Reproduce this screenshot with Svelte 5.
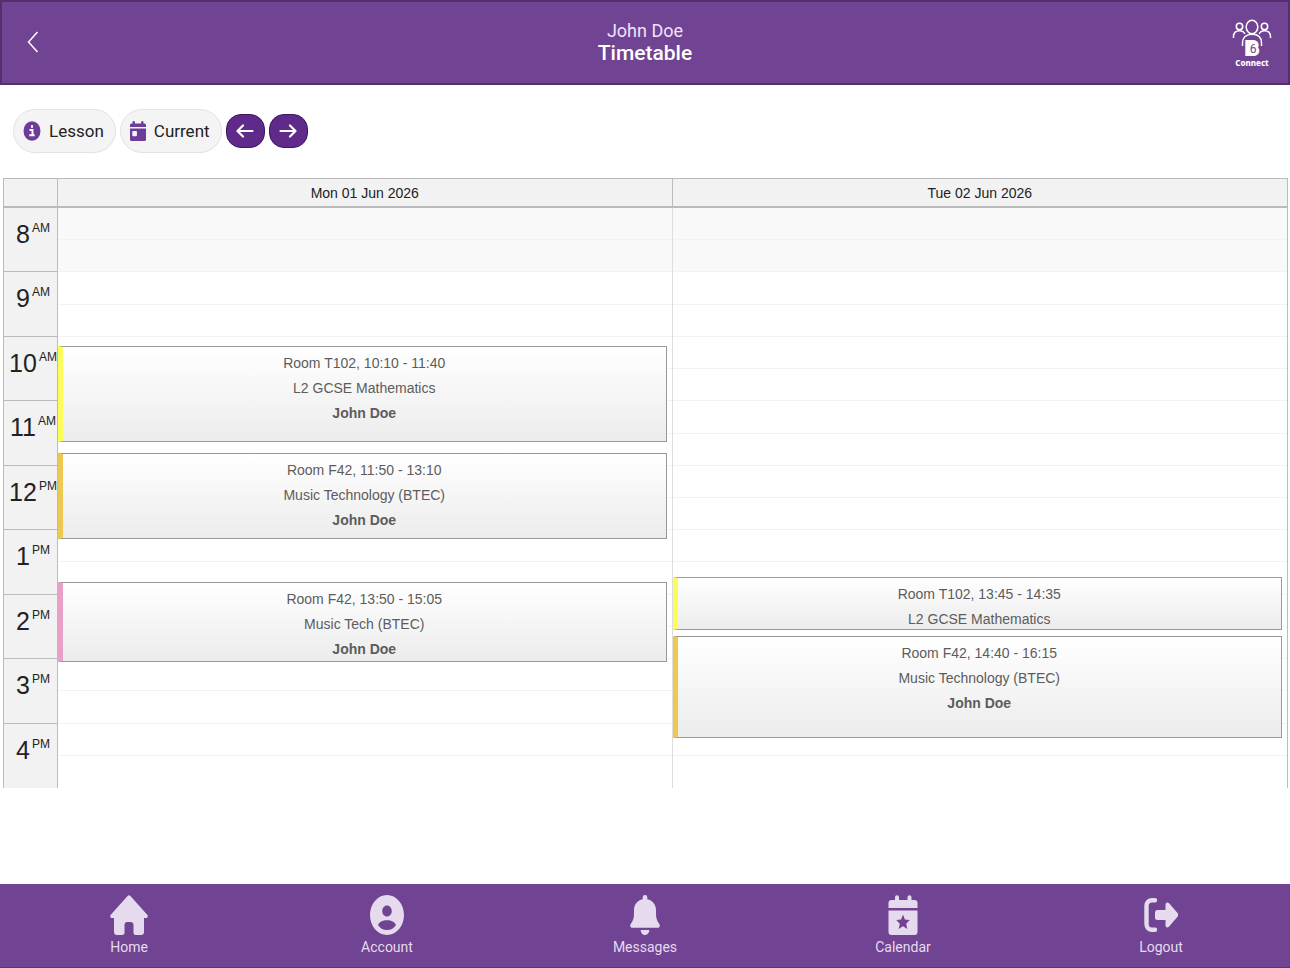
<script>
  // the board shows 8:00 to 17:00, one grid row for every five minutes
  const firstHour = 8;
  const hours = [8, 9, 10, 11, 12, 13, 14, 15, 16];

  const days = [
    {
      label: 'Mon 01 Jun 2026',
      lessons: [
        { room: 'Room T102', start: '10:10', end: '11:40', title: 'L2 GCSE Mathematics', name: 'John Doe', colour: 'yellow' },
        { room: 'Room F42', start: '11:50', end: '13:10', title: 'Music Technology (BTEC)', name: 'John Doe', colour: 'amber' },
        { room: 'Room F42', start: '13:50', end: '15:05', title: 'Music Tech (BTEC)', name: 'John Doe', colour: 'pink' }
      ]
    },
    {
      label: 'Tue 02 Jun 2026',
      lessons: [
        { room: 'Room T102', start: '13:45', end: '14:35', title: 'L2 GCSE Mathematics', name: '', colour: 'yellow' },
        { room: 'Room F42', start: '14:40', end: '16:15', title: 'Music Technology (BTEC)', name: 'John Doe', colour: 'amber' }
      ]
    }
  ];

  function line(time) {
    const [h, m] = time.split(':').map(Number);
    return (h - firstHour) * 12 + m / 5 + 1;
  }
</script>

<div class="page">
  <header class="topbar">
    <button class="back" aria-label="Back">
      <svg width="12" height="22" viewBox="0 0 12 22"><path d="M10.5 1 1.5 11l9 10" fill="none" stroke="currentColor" stroke-width="1.5" /></svg>
    </button>
    <div class="heading">
      <span class="person">John Doe</span>
      <h1>Timetable</h1>
    </div>
    <a class="connect" href="#connect">
      <svg width="40" height="38" viewBox="0 0 40 38" fill="none" stroke="currentColor" stroke-width="1.5">
        <ellipse cx="20" cy="8" rx="5.8" ry="6.8" />
        <circle cx="7.5" cy="7.5" r="3.2" />
        <circle cx="32.5" cy="7.5" r="3.2" />
        <path d="M1.500 19v-1.500c0-3.800 2.500-5.800 6-5.800 2.800 0 4.600 1.200 5.400 3.300M38.500 19v-1.500c0-3.800-2.500-5.800-6-5.800-2.800 0-4.600 1.200-5.400 3.300M10.500 27v-3c0-5.500 3.500-8.800 9.500-8.800s9.500 3.300 9.500 8.800v3" />
        <text x="20" y="35" text-anchor="middle" class="mark">B</text>
        <text x="21" y="34" text-anchor="middle" class="mark-six">6</text>
      </svg>
      <span>Connect</span>
    </a>
  </header>

  <div class="toolbar">
    <button class="pill">
      <svg width="18" height="20" viewBox="0 0 18 20">
        <ellipse cx="9" cy="10" rx="8.5" ry="9.8" fill="#6b3d98" />
        <path d="M9 4.200v2.600M6.500 9H9.500v5M6.300 14.300h5.400" fill="none" stroke="#fff" stroke-width="2" />
      </svg>
      Lesson
    </button>
    <button class="pill">
      <svg width="16" height="20" viewBox="0 0 16 20" fill="#6b3d98">
        <path d="M2.500 1.200a1.200 1.200 0 0 1 2.400 0V2.500h6.200V1.200a1.200 1.200 0 0 1 2.400 0V2.500H14.500A1.500 1.500 0 0 1 16 4v2H0V4a1.500 1.500 0 0 1 1.500-1.500h1z" />
        <path fill-rule="evenodd" d="M0 7.500h16v11a1.500 1.500 0 0 1-1.500 1.500h-13A1.500 1.500 0 0 1 0 18.500zM3 10a.7.7 0 0 0-.7.700v3.800c0 .4.300.7.700.7h3.200a.7.7 0 0 0 .7-.7v-3.800a.7.7 0 0 0-.7-.7z" />
      </svg>
      Current
    </button>
    <button class="step" aria-label="Previous">
      <svg width="18" height="14" viewBox="0 0 18 14"><path d="M16.500 7H2M7 1.500 1.500 7 7 12.500" /></svg>
    </button>
    <button class="step" aria-label="Next">
      <svg width="18" height="14" viewBox="0 0 18 14"><path d="M1.500 7H16M11 1.500 16.500 7 11 12.500" /></svg>
    </button>
  </div>

  <main class="board">
    <div class="corner"></div>
    {#each days as day}
      <div class="day-name">{day.label}</div>
    {/each}

    <div class="hours">
      {#each hours as h}
        <div class="hour">
          <span>{h > 12 ? h - 12 : h}</span><small>{h < 12 ? 'AM' : 'PM'}</small>
        </div>
      {/each}
    </div>

    {#each days as day}
      <div class="day">
        {#each hours as h, i}
          <div class="slot" class:closed={h < 9} style="grid-row: {i * 12 + 1} / span 6"></div>
          <div class="slot" class:closed={h < 9} style="grid-row: {i * 12 + 7} / span 6"></div>
        {/each}
        {#each day.lessons as lesson}
          <article class="lesson {lesson.colour}" style="grid-row: {line(lesson.start)} / {line(lesson.end)}">
            <p>{lesson.room}, {lesson.start} - {lesson.end}</p>
            <p>{lesson.title}</p>
            {#if lesson.name}
              <p><strong>{lesson.name}</strong></p>
            {/if}
          </article>
        {/each}
      </div>
    {/each}
  </main>

  <nav class="tabs">
    <a href="#home">
      <svg width="40" height="40" viewBox="0 0 40 40">
        <path d="M18.600 1a2 2 0 0 1 2.800 0L38 19.500c1.500 1.500.8 3.500-1.200 3.500H35v14a3 3 0 0 1-3 3h-5a2.500 2.500 0 0 1-2.500-2.500V30a3 3 0 0 0-3-3h-3a3 3 0 0 0-3 3v7.500A2.500 2.500 0 0 1 13 40H8a3 3 0 0 1-3-3V23H3.200C1.200 23 .5 21 2 19.500z" />
      </svg>
      Home
    </a>
    <a href="#account">
      <svg width="40" height="40" viewBox="0 0 40 40">
        <path fill-rule="evenodd" d="M20 0c9.400 0 17 9 17 20s-7.600 20-17 20S3 31 3 20 10.600 0 20 0zM20 10.500c-2.800 0-4.800 2.500-4.800 5.500s2 5.500 4.800 5.500 4.800-2.500 4.800-5.500-2-5.500-4.800-5.500zM11 30c1.700 3 5 5 9 5s7.300-2 9-5c-1-3-4.500-4.800-9-4.800S12 27 11 30z" />
      </svg>
      Account
    </a>
    <a href="#messages">
      <svg width="40" height="40" viewBox="0 0 40 40">
        <path d="M17.700 2.300a2.300 2.300 0 0 1 4.600 0V4.200C27.500 5.200 31 9.500 31 15v4c0 4 1 7 3 9.500.6.800.8 1.300.8 2.200 0 1.200-.9 2.100-2.100 2.100H7.300c-1.200 0-2.100-.9-2.100-2.100 0-.9.200-1.400.8-2.200 2-2.500 3-5.500 3-9.500v-4c0-5.500 3.500-9.800 8.700-10.800zM15.700 35h8.600c0 2.800-1.900 5-4.300 5s-4.300-2.200-4.300-5z" />
      </svg>
      Messages
    </a>
    <a href="#calendar">
      <svg width="40" height="40" viewBox="0 0 40 40">
        <path d="M12 2.300a2 2 0 0 1 4 0V5h8.500V2.300a2 2 0 0 1 4 0V5H31.500A3 3 0 0 1 34.500 8v5h-29V8a3 3 0 0 1 3-3H12z" />
        <path fill-rule="evenodd" d="M5.500 15.500h29V37a3 3 0 0 1-3 3h-23a3 3 0 0 1-3-3zM20 19.500l-1.900 5-4.900.5 3.600 3.700-1.100 5.300 4.300-2.700 4.300 2.700-1.100-5.300 3.600-3.700-4.900-.5z" />
      </svg>
      Calendar
    </a>
    <a href="#logout">
      <svg width="40" height="40" viewBox="0 0 40 40">
        <path d="M14 5.200h-3c-3.300 0-5.500 2.300-5.500 5.800v18c0 3.500 2.200 5.800 5.500 5.800h3" fill="none" stroke="currentColor" stroke-width="4.4" stroke-linecap="round" />
        <path d="M16.500 15h8V10c0-2.600 2-3.300 3.600-1.700l8.200 9.500c1.200 1.400 1.200 2.900 0 4.300l-8.200 9.500c-1.600 1.700-3.600 1-3.600-1.600v-5h-8a2.500 2.500 0 0 1-2.500-2.500v-5a2.500 2.500 0 0 1 2.500-2.500z" />
      </svg>
      Logout
    </a>
  </nav>
</div>

<style>
:global(body) {
  margin: 0;
  background: #fff;
}
.page {
  display: flex;
  flex-direction: column;
  min-height: 100vh;
  font-family: Roboto, "Liberation Sans", sans-serif;
}
button {
  font: inherit;
  cursor: pointer;
}
a {
  color: inherit;
  text-decoration: none;
}

.topbar {
  display: grid;
  grid-template-columns: 80px 1fr 80px;
  align-items: center;
  box-sizing: border-box;
  height: 85px;
  background: #704492;
  border: 2px solid #53306d;
  color: #fff;
}
.back {
  justify-self: start;
  display: flex;
  padding: 7px 25px 9px;
  border: none;
  background: none;
  color: #fff;
}
.heading {
  text-align: center;
}
.person {
  display: block;
  font-size: 18px;
  line-height: 22px;
  color: #f3e2fb;
}
h1 {
  margin: 0;
  font-size: 21px;
  line-height: 23px;
  font-weight: 500;
}
.connect {
  justify-self: end;
  display: flex;
  flex-direction: column;
  align-items: center;
  margin-right: 16px;
  padding-top: 2px;
  font-family: "Noto Sans", sans-serif;
  font-size: 8px;
  line-height: 12px;
  font-weight: 800;
}
.connect svg {
  overflow: visible;
}
.mark {
  font: bold 16px "Liberation Sans", sans-serif;
  fill: #fff;
  stroke: #fff;
  stroke-width: 4px;
}
.mark-six {
  font: 12px Roboto, sans-serif;
  fill: #704492;
  stroke: none;
}

.toolbar {
  display: flex;
  align-items: center;
  gap: 4px;
  padding: 24px 13px 25px;
}
.pill {
  display: flex;
  align-items: center;
  gap: 8px;
  height: 44px;
  padding: 0 11px 0 9px;
  border: 1px solid #e2e2e2;
  border-radius: 22px;
  background: #f4f4f4;
  color: #222;
  font-size: 17px;
}
.step {
  display: flex;
  align-items: center;
  justify-content: center;
  width: 39px;
  height: 34px;
  padding: 0;
  border: 1px solid #40165f;
  border-radius: 15px;
  background: #5f2a8a;
}
.step svg {
  fill: none;
  stroke: #fff;
  stroke-width: 2.2;
  stroke-linecap: round;
  stroke-linejoin: round;
}

.board {
  display: grid;
  grid-template-columns: 54px 1fr 1fr;
  grid-template-rows: 30px 580px;
  margin: 0 2px 0 3px;
  border-left: 1px solid #bbb;
  border-right: 1px solid #bbb;
  font-family: "Liberation Sans", Arial, sans-serif;
}
.corner,
.day-name {
  box-sizing: border-box;
  border: solid #bbb;
  border-width: 1px 1px 2px 0;
  background: #f2f2f2;
}
.day-name {
  font-size: 14px;
  line-height: 28px;
  text-align: center;
  color: #222;
}
.day-name:nth-child(3) {
  border-right: none;
}
.hours {
  display: grid;
  grid-template-rows: repeat(9, minmax(0, 1fr));
  border-right: 1px solid #bbb;
  background: #f2f2f2;
  color: #222;
}
.hour {
  display: flex;
  justify-content: center;
  gap: 2px;
  padding: 9px 0 0 5px;
  border-bottom: 1px solid #bbb;
}
.hour:last-child {
  border-bottom: none;
}
.hour span {
  font-size: 25px;
  line-height: 34px;
}
.hour small {
  font-size: 12px;
  line-height: 23px;
}
.day {
  display: grid;
  grid-template-columns: minmax(0, 1fr);
  grid-template-rows: repeat(108, minmax(0, 1fr));
}
.day:not(:last-child) {
  border-right: 1px solid #ddd;
}
.slot {
  grid-column: 1;
  border-bottom: 1px solid #f3f3f3;
}
.slot:nth-child(18) {
  border-bottom: none;
}
.slot.closed {
  background: #f9f9f9;
}
.lesson {
  grid-column: 1;
  margin: -2px 5px 2px 0;
  border: 1px solid #999;
  border-left-width: 5px;
  overflow: hidden;
  padding-top: 4px;
  background: linear-gradient(#fff, #ececec);
  text-align: center;
  color: #5c5c5c;
  font-size: 14px;
  line-height: 25px;
}
.lesson p {
  margin: 0;
}
.yellow {
  border-left-color: #fdfd5a;
}
.amber {
  border-left-color: #edc951;
}
.pink {
  border-left-color: #e8a0c8;
}

.tabs {
  display: grid;
  grid-template-columns: repeat(5, 1fr);
  box-sizing: border-box;
  height: 84px;
  margin-top: auto;
  padding-top: 11px;
  background: #704492;
  border-bottom: 1px solid #553a68;
  color: #e6dbee;
}
.tabs a {
  display: flex;
  flex-direction: column;
  align-items: center;
  font-size: 14px;
  line-height: 24px;
}
.tabs svg {
  fill: currentColor;
}
</style>
